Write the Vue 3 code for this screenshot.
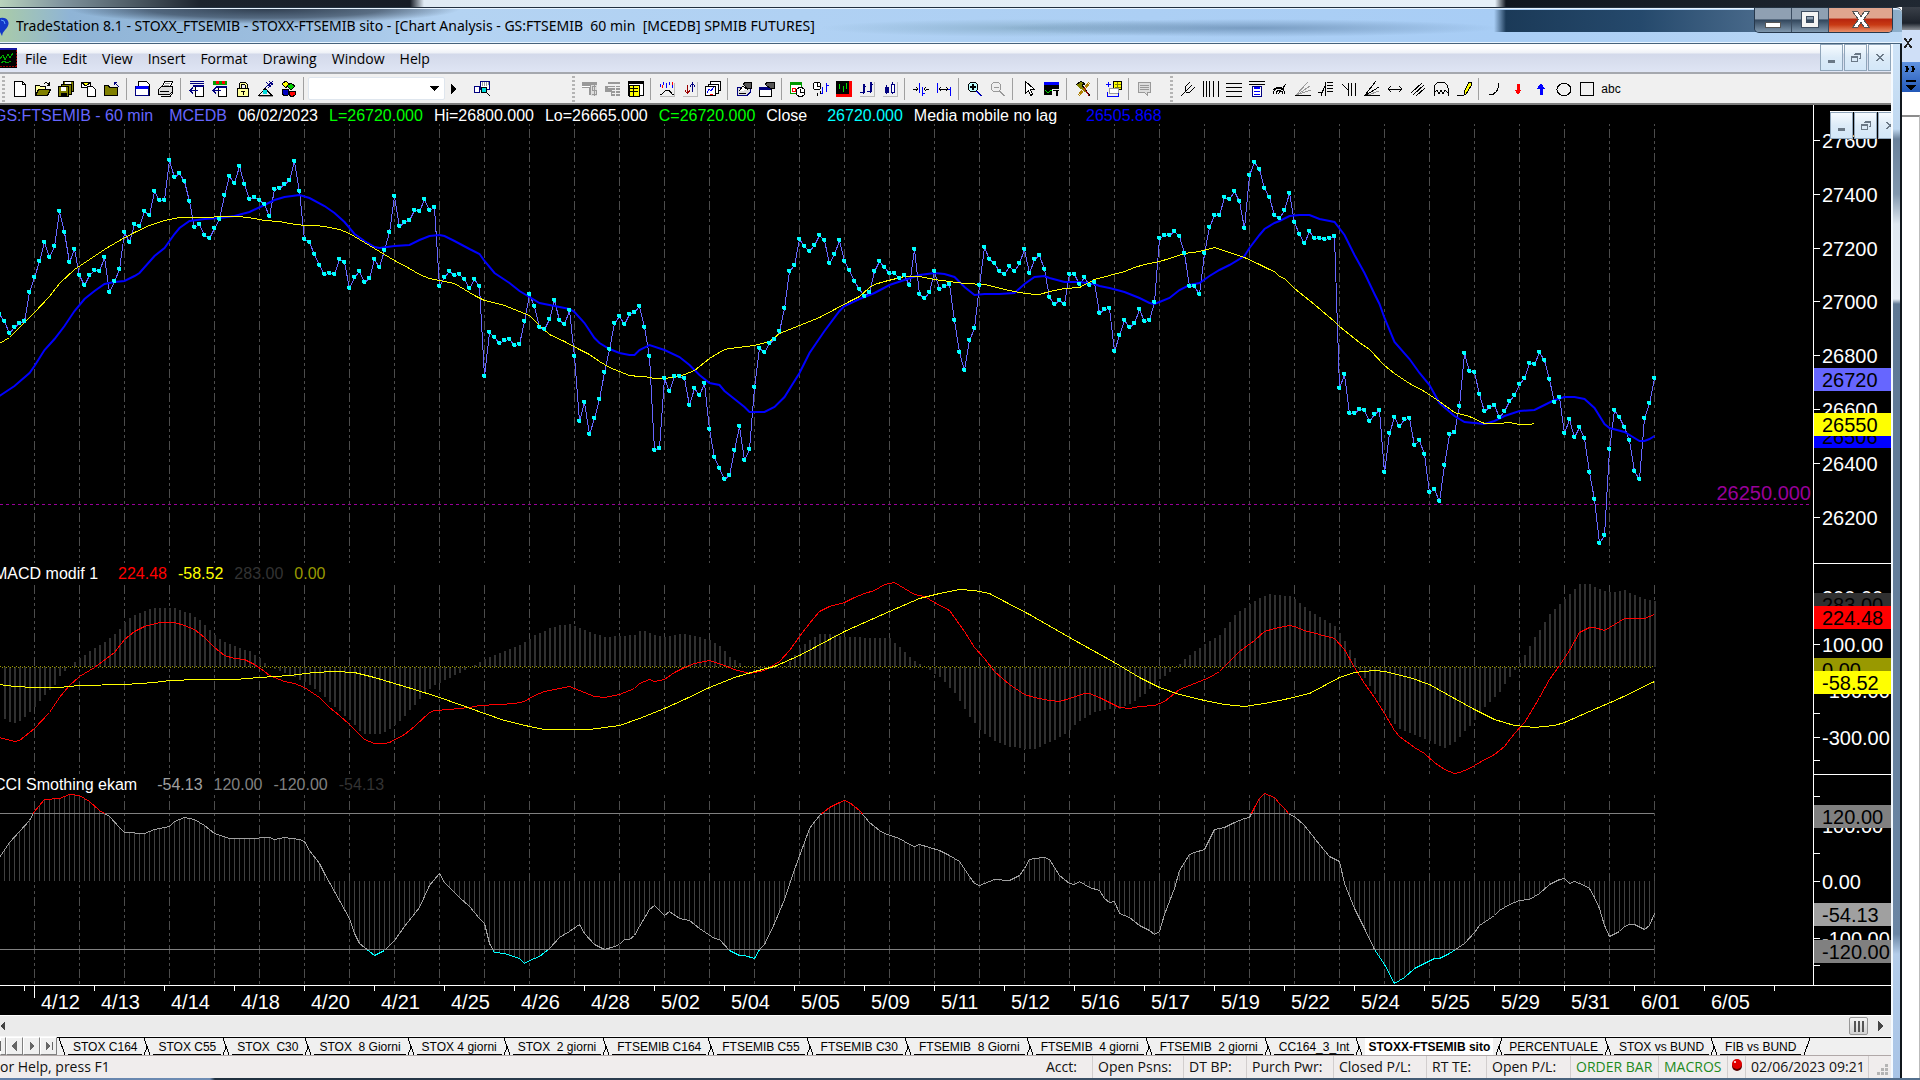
<script setup>
const FIRST_X = 34.5
const STEP = 5
const LAST_BAR = 324
const barX = (i) => FIRST_X + i * STEP

// Closing levels, one per bar from bar -7, in thirds of a plot row.
const closes = `552 573 609 591 579 573 486 441 393 336 381 348 243 306 396 357 435 465 435 420 423 381 486 453 417 306 336
282 288 243 255 183 210 210 90 141 129 153 213 291 282 315 324 294 267 195 138 159 108 162 207 201 210 222 258 177 174 162
150 93 183 327 336 372 405 432 429 432 387 396 474 441 423 456 444 387 411 360 306 198 288 276 270 240 243 207 240 231 468
441 423 435 432 447 474 447 468 738 606 621 639 630 627 645 642 573 492 528 591 597 567 510 570 582 540 678 873 816 912 864
807 726 657 579 558 582 552 546 528 591 678 960 954 744 783 738 738 744 825 774 795 759 897 981 1014 1047 1035 960 888 990
957 771 654 666 639 627 603 534 423 405 327 348 363 345 315 330 399 372 330 393 420 453 477 498 486 423 393 411 429 429 444
435 465 357 492 504 486 423 477 468 462 570 666 720 630 594 465 351 387 399 423 432 408 423 399 357 429 387 375 417 501 522
510 522 432 432 462 441 465 456 549 537 534 663 615 570 591 579 537 573 570 516 324 315 315 303 318 369 468 468 492 369 291
255 255 201 207 183 213 294 135 96 117 174 201 255 264 240 189 276 312 339 303 324 324 327 324 318 774 732 849 849 837 840
873 852 840 1026 909 861 888 867 864 945 930 972 1086 1077 1113 1005 912 906 828 669 723 726 792 843 831 825 861 843 813
795 762 744 699 702 666 690 747 816 801 909 867 921 891 924 1026 1107 1239 1215 957 840 861 891 930 1023 1047 864 819 744`
  .split(/\s+/).map(Number)

const fastAverage = `-7:795 -4:765 -1:727 0:705 2:657 4:625 6:585 8:540 10:505 12:480 14:460 16:454 18:450 20:435 21:425 24:375 26:350
28:310 29:292 31:270 34:263 37:262 40:256 43:244 46:222 48:207 50:197 53:192 55:200 58:226 60:245 62:272 64:310 66:330 68:347
69:350 72:346 75:341 77:328 79:314 81:312 82:315 84:330 87:354 89:370 90:390 92:427 95:457 97:480 99:499 101:517 104:526
107:535 108:544 110:575 112:620 113:636 115:655 117:665 119:671 120:671 121:658 123:641 126:656 129:677 131:702 133:733
135:755 137:763 138:780 140:804 142:828 143:843 146:843 148:829 150:798 153:725 155:665 158:600 161:540 162:525 165:505
168:487 171:462 174:448 177:431 180:426 182:429 184:439 186:468 188:491 190:489 193:489 196:485 198:458 200:438 202:435
203:442 206:452 209:454 212:458 213:465 215:471 218:482 221:500 223:517 224:519 225:514 227:501 229:477 231:462 233:455
235:434 237:418 239:402 242:375 243:352 245:312 246:294 248:277 249:271 251:255 253:252 255:252 257:265 260:273 262:313
264:373 266:425 268:490 269:520 270:560 272:632 275:685 277:725 279:762 281:815 284:855 286:873 290:879 292:870 294:855
297:840 300:836 302:823 304:807 306:798 308:798 310:803 312:830 314:880 315:892 318:904 320:920 321:930 322:930 323:924 324:915`

const slowAverage = `-7:639 -5:621 -3:591 0:547 3:497 5:460 8:418 11:388 14:358 17:331 20:305 23:286 26:270 29:260 31:260 41:259 44:265
46:271 49:274 51:280 54:284 56:284 58:288 61:297 63:309 65:326 67:345 69:362 72:389 75:414 77:432 79:443 81:449 84:458 86:478
88:496 90:509 91:514 94:525 97:542 99:556 101:585 103:611 106:633 109:657 111:671 113:694 115:710 117:722 119:736 121:739
122:739 124:745 126:745 129:738 132:720 135:685 138:656 139:653 144:644 147:634 149:610 153:584 157:560 160:538 163:514
165:498 167:470 168:463 170:454 174:437 177:437 180:446 183:454 186:459 190:461 191:465 194:477 197:485 200:493 201:491
203:482 206:473 209:470 212:446 215:434 218:424 220:412 222:401 225:392 227:383 230:368 233:362 236:352 239:366 242:381
245:401 247:417 248:424 249:437 250:445 252:473 256:523 260:574 261:587 265:635 267:657 270:705 272:728 275:760 278:784
281:813 284:847 287:857 290:879 293:880 295:877 297:882 299:883 300:878`

const macdBars = `-7:470 -6:478 -5:485 -4:489 -3:483 -2:471 -1:456 0:440 2:406 4:376 5:348 7:320 9:294 12:264 15:235 17:206 18:185
20:165 22:152 24:144 28:144 31:160 33:180 36:225 38:246 40:258 43:274 45:295 47:322 49:333 51:345 54:367 57:395 60:440 63:480
65:512 66:522 69:522 71:507 73:483 76:434 78:400 80:375 82:360 85:338 87:322 90:297 93:279 96:261 98:246 100:225 103:205
105:196 107:193 109:204 111:217 114:231 117:228 120:224 121:214 122:214 123:218 124:226 126:231 128:224 130:222 133:231
135:240 137:257 139:290 142:317 144:325 147:328 150:318 152:285 153:264 155:240 157:222 159:223 162:231 167:233 171:235
173:262 175:292 178:322 181:350 184:400 187:470 189:510 192:542 195:560 198:567 200:566 203:547 206:523 209:482 212:455
215:448 217:446 219:432 222:401 225:358 228:325 231:285 234:252 237:225 240:165 243:133 245:115 247:103 249:105 251:108
252:118 254:142 257:171 260:198 262:242 264:295 265:330 267:378 269:425 271:474 273:507 275:520 278:536 281:558 282:564
284:546 287:498 290:440 293:395 295:350 297:310 298:285 300:232 303:163 306:118 308:88 309:72 311:72 313:88 315:97 318:91
320:105 322:117 324:123`

const macdLine = `-7:530 -4:542 -3:540 0:504 3:456 5:410 7:374 9:348 12:320 16:275 18:238 20:212 22:197 25:187 28:187 30:195 32:208
34:232 36:262 38:286 40:294 42:298 44:312 46:332 47:345 50:363 52:368 54:381 57:410 59:440 61:464 63:493 65:522 66:537 68:550
70:550 71:547 74:522 76:497 79:457 80:451 83:448 87:441 89:434 93:431 96:429 98:423 100:405 102:394 105:385 107:379 110:395
112:407 114:412 117:403 120:385 121:370 123:358 124:364 126:358 128:337 130:322 132:308 135:301 138:314 140:327 143:340
146:330 149:303 151:270 153:228 155:188 157:153 159:138 162:126 164:112 166:98 168:90 170:71 172:67 174:85 176:101 178:108
180:125 183:150 184:172 186:212 188:262 190:294 192:333 195:372 198:402 200:411 203:419 205:422 207:413 210:400 211:400
213:411 215:426 217:441 219:445 221:437 224:436 226:422 229:388 232:369 235:352 237:334 239:303 241:273 244:240 246:214
248:204 250:198 251:196 252:199 254:211 257:222 260:233 262:267 264:320 266:370 268:412 270:460 272:510 273:529 276:560
278:580 280:605 282:627 283:634 284:638 285:636 287:625 289:606 292:582 294:557 296:520 298:487 299:462 301:410 303:358
305:315 307:270 309:217 311:202 312:202 314:209 316:191 318:175 322:175 324:163`

const macdSignal = `-7:371 -4:379 0:382 5:381 9:374 18:373 24:366 27:361 33:358 40:358 45:352 51:345 56:337 60:334 64:337 68:350 72:368
76:388 81:410 85:431 90:460 94:480 99:499 102:507 106:508 111:506 117:494 121:475 126:445 130:416 135:382 140:350 144:334
148:317 153:286 162:212 171:152 177:114 181:98 185:88 188:90 191:100 194:122 199:162 207:232 216:305 221:350 225:380 229:402
234:421 238:432 242:437 246:430 250:416 255:398 261:350 264:337 268:331 270:334 275:350 279:372 284:415 288:448 292:477
296:494 300:501 304:495 306:486 311:452 317:415 324:363`

const cciLine = `-7:890 -5:845 -3:812 -1:780 0:752 2:718 5:715 7:701 9:706 11:724 13:750 15:768 17:800 18:816 22:818 24:806 27:798
28:783 30:772 32:777 34:795 36:820 39:833 43:833 47:832 48:837 50:832 53:836 54:843 55:870 57:908 58:940 59:965 61:1020
63:1075 64:1118 65:1150 67:1172 68:1184 70:1171 72:1140 74:1098 77:1040 79:975 81:938 82:965 85:1010 87:1038 89:1073 90:1090
91:1150 92:1177 94:1180 97:1195 98:1208 99:1201 101:1188 103:1163 105:1130 107:1112 109:1092 110:1118 112:1152 114:1166
116:1159 117:1152 118:1136 119:1138 120:1125 121:1098 123:1048 124:1034 126:1065 127:1053 129:1075 131:1080 133:1105 136:1134
137:1136 139:1170 141:1184 142:1184 144:1193 145:1168 146:1152 148:1090 150:1018 152:928 154:845 155:803 157:766 159:740
161:726 162:721 163:726 165:750 167:785 169:810 170:820 173:833 175:852 176:857 177:853 179:860 181:870 183:884 185:903
187:947 188:968 189:976 190:968 192:956 195:960 197:945 198:925 199:898 200:893 202:891 203:897 205:945 207:968 208:971
209:964 211:980 213:990 214:1015 215:1027 216:1024 217:1060 219:1070 221:1095 223:1110 224:1123 225:1114 226:1062 228:985
229:930 231:882 232:877 234:868 236:807 238:800 240:787 242:775 243:770 244:742 245:715 246:700 248:712 249:730 250:745
251:762 252:768 254:795 257:853 259:888 261:903 262:968 264:1045 266:1105 268:1168 270:1213 272:1270 274:1252 276:1225
278:1208 280:1195 281:1195 283:1178 286:1148 288:1115 289:1095 292:1066 293:1050 295:1032 297:1021 299:1016 301:1000 303:972
305:957 306:953 307:970 308:964 310:974 311:985 312:1010 313:1045 314:1095 315:1128 317:1113 318:1098 319:1093 320:1093
322:1108 323:1095 324:1060`

const parse = (text) => text.split(/\s+/).map((pair) => pair.split(':').map(Number))
const priceY = (v) => Math.round(25 + v / 3)
const macdY = (v) => Math.round(v / 3 - 3)
const cciY = (v) => Math.round(v / 3 - 214)

const toPoints = (pairs, scale, nudge = 0.5) => pairs.map(([i, v]) => `${barX(i)},${scale(v) + nudge}`).join(' ')

const valueAt = (pairs, i) => {
  const next = pairs.findIndex(([bar]) => bar >= i)
  if (next <= 0) return pairs[0][1]
  const [a, va] = pairs[next - 1]
  const [b, vb] = pairs[next]
  return va + ((vb - va) * (i - a)) / (b - a)
}

const barsPath = (pairs, zero, scale) => {
  let d = ''
  for (let i = -6; i <= LAST_BAR; i++) d += `M${barX(i)} ${zero}V${scale(valueAt(pairs, i))}`
  return d
}

const closePairs = closes.map((v, n) => [n - 7, v])
const closePoints = toPoints(closePairs, priceY)
const dotsPath = closePairs.map(([i, v]) => `M${Math.floor(barX(i)) - 2} ${priceY(v) - 2}h4v4h-3v-1h-1z`).join('')
const fastPoints = toPoints(parse(fastAverage), priceY, 1)
const slowPoints = toPoints(parse(slowAverage), priceY)
const macdPoints = toPoints(parse(macdLine), macdY)
const signalPoints = toPoints(parse(macdSignal), macdY)
const macdBarsPath = barsPath(parse(macdBars), 104, macdY)
const cciPoints = toPoints(parse(cciLine), cciY)
const cciBarsPath = barsPath(parse(cciLine), 107, cciY)
const gridX = Array.from({ length: 37 }, (_, k) => FIRST_X + 45 * k)
const tickX = Array.from({ length: 26 }, (_, k) => 24.5 + 70 * k)

const days = ['4/12', '4/13', '4/14', '4/18', '4/20', '4/21', '4/25', '4/26', '4/28', '5/02', '5/04', '5/05', '5/09', '5/11',
  '5/12', '5/16', '5/17', '5/19', '5/22', '5/24', '5/25', '5/29', '5/31', '6/01', '6/05']

const pct = (y, h) => ({ top: `${(y / h) * 100}%` })
const priceScale = [27600, 27400, 27200, 27000, 26800, 26600, 26400, 26200].map((label, k) => ({ label, y: 36 + Math.round(53.8 * k) }))
const priceTags = [
  { label: '26720', y: 275, kind: 'violet' }, { label: '26506', y: 332, kind: 'blue' }, { label: '26550', y: 320, kind: 'yellow' },
]
const macdScale = [
  { label: '300.00', y: 34 }, { label: '100.00', y: 81 }, { label: '-100.00', y: 128 }, { label: '', y: 151 },
  { label: '-300.00', y: 175 }, { label: '', y: 198 },
]
const macdTags = [
  { label: '283.00', y: 41, kind: 'coal' }, { label: '224.48', y: 54, kind: 'red' },
  { label: '0.00', y: 107, kind: 'olive' }, { label: '-58.52', y: 120, kind: 'yellow' },
]
const cciScale = [
  { label: '', y: 22 }, { label: '100.00', y: 51 }, { label: '', y: 79 }, { label: '0.00', y: 108 },
  { label: '-100.00', y: 165 }, { label: '', y: 192 },
]
const cciTags = [
  { label: '120.00', y: 42, kind: 'grey' }, { label: '-54.13', y: 141, kind: 'silver' }, { label: '-120.00', y: 178, kind: 'grey' },
]

const K = '#000', N = '#000080', W = '#fff', G = '#999', O = '#808000', Y = '#ffff00', B = '#0000ff'
// Each layer is [path, fill, stroke].
const icons = {
  New: [['M2.500 .5h8l3 3v12h-11z', W, K], ['M10.500 .5v3h3', 'none', K]],
  Open: [['M.5 14V4.500h4l1 1h5v3', '#ffff99', K], ['M.5 14.500l3-6h12l-3 6z', O, K], ['M9 2.500q3-2 5 1M14.500 1v3h-3', 'none', K]],
  'Save all': [['M5.500 .5h10v10h-10z', O, K], ['M3 3h10v10H3z', O, K], ['M.5 5.500h10v10H.5z', O, K], ['M3 6h5v4H3z', W, 'none'], ['M3 12h6v3H3z', K, 'none'], ['M7 1h6v2H7z', W, 'none']],
  'New from mail': [['M.5 1.500h9v5h-9z', W, K], ['M1 2l4 3 4-3', Y, K], ['M6.500 5.500h5l3 3v7h-8z', W, K]],
  'Close folder': [['M.5 14.500v-10h4l1 2h8v8z', O, K], ['M10 1.500h3M10.500 1v3M11 2l4 4', 'none', N]],
  'Page setup': [['M3.500 .5h8l3 3v11h-11z', W, K], ['M.5 5.500h13v9H.5z', W, N], ['M1 5h12v3H1z', B, 'none']],
  Print: [['M4.500 5.500l2-5h8l-2 5z', W, K], ['M.5 8.500l3-3h11v5l-3 3H.5z', '#ddd', K], ['M2 10.500h9M3 15.500h9l3-4', 'none', K], ['M7 2.500h5M6 4.500h5', 'none', G]],
  'Format bar': [['M1 .5h14M1 2.500h14', 'none', N], ['M4 4h11v2H4z', N, 'none'], ['M6.500 6v9h8V6', W, K], ['M1 9.500h8M4 6.500l-3 3 3 3', 'none', N]],
  'Format colours': [['M1 0h14v4H1z', '#00a000', 'none'], ['M4 0h3v3H4zM10 0h3v3h-3z', '#f00', 'none'], ['M4 5h11v2H4z', N, 'none'], ['M6.500 7v8h8V7', W, K], ['M1 9.500h8M4 6.500l-3 3 3 3', 'none', N]],
  Lock: [['M4 7V3l2-2h4l2 2v4h-2V4L9 3H7L6 4v3z', '#ffff99', K], ['M2.500 7.500h11v8h-11z', '#ffff99', K], ['M6 10.500h4M8 10v4', 'none', K]],
  Network: [['M1 14.500l6-7 7 7z', '#eee', K], ['M5 9h4v4H5z', '#0dd', 'none'], ['M7 7l8-7M10 7l5-5M8 1l5 5M11 0l4 4', 'none', N], ['M1 15.500h14', 'none', G]],
  Blocks: [['M1 3l4-3 3 3-3 4z', Y, K], ['M6 5l4-3 4 3-4 4z', '#0c0', K], ['M1 8h6v6l-3 1-3-2z', '#0000c0', K], ['M8 10h6v4l-3 2-3-2z', '#f00', K]],
  Find: [['M.5 5.500h5v6h-5zM6.500 .5h9v8h-9z', W, N], ['M8 1v4M10 1v4M12 1v4M14 1v3', 'none', G], ['M7 9a3 3 0 1 1 6 0a3 3 0 1 1-6 0z', '#0dd', K], ['M12 11l4 4', 'none', K]],
  Account: [['M0 1h15v14h-4V8H9v6H7V7H0z', G, 'none'], ['M0 5h8', 'none', W], ['M9 4h6v11H9z', '#ddd', 'none'], ['M14 5.500h-4v4h4v4h-4M12 4v11', 'none', G]],
  Orders: [['M3 1h12v2H3zM0 5h15v10H6v-4H0z', G, 'none'], ['M3 6.500h12M7 9.500h8M7 12.500h8M10.500 5v10', 'none', '#eee']],
  Positions: [['M.5 .5h15v14H.5z', W, K], ['M0 0h15v3H0z', K, 'none'], ['M1 4h10v11H1z', Y, K], ['M2 7.500h8M2 10.500h8M5.500 5v10', 'none', K]],
  Study: [['M1 3v3M4 1v3M7 2v5M10 1v3M13 4v3', 'none', B], ['M13.500 1v3M3.500 4v3', 'none', '#f00'], ['M1 13h2l4-4h3l3 4h2', 'none', K], ['M1 15.500h14V2', 'none', '#bbb']],
  Signals: [['M5.500 4v8M3 9.500l2.500 3 2.500-3', 'none', '#900'], ['M10.500 11V3M8 5.500L10.500 2 13 5.500', 'none', N], ['M1 15.500h14V1', 'none', '#bbb']],
  Charts: [['M5.500 .5h10v9h-10z', W, K], ['M3 3h10v9H3z', W, K], ['M.5 5.500h10v9H.5z', W, K], ['M2 12l2-4 2 2 3-4', 'none', B], ['M5 13h3', 'none', '#f00']],
  'Format symbol': [['M1 6.500h13v5l-3 3H1z', '#ddd', N], ['M7 3l3-2h5v6h-4z', '#555', K], ['M3 10l4-5 5 4M3 12h7', W, K]],
  'Format window': [['M.5 6.500h12v9H.5z', W, K], ['M0 6h12v3H0z', N, 'none'], ['M6 3l3-2h6v6h-4L8 5z', '#555', K]],
  'Time range': [['M.5 1.500h11v11H.5z', W, '#090'], ['M0 1h12v3H0z', '#090', 'none'], ['M2 7h3v3H2z', W, '#f00'], ['M6 11a4.500 4.500 0 1 1 9 0a4.500 4.500 0 1 1-9 0z', W, K], ['M10.500 8v3h3', 'none', K]],
  Interval: [['M0 5a4 4 0 1 1 8 0a4 4 0 1 1-8 0z', W, K], ['M4 2v3h3M4 12v3M7 10v3', 'none', K], ['M9.500 6v7M9.500 12h-2M13.500 2v9M13.500 4h2', 'none', B]],
  'Chart style': [['M0 0h16v16H0z', '#f00', 'none'], ['M0 0h13v13H0z', K, 'none'], ['M3.500 3v5M7.500 5v6M10.500 2v6', 'none', '#0d0']],
  'Bar chart': [['M4 3v10M1 11h3M4 5h3M11 1v11M8 10h3M11 3h3M5 3v9M12 1v10', 'none', N], ['M1 15.500h14V1', 'none', '#bbb']],
  Candlestick: [['M4.500 4v9M10.500 1v12', 'none', N], ['M3 6h3v5H3z', N, N], ['M9 3h3v8H9z', W, N], ['M1 15.500h14V1', 'none', '#bbb']],
  'Less spacing': [['M0 8h4M3 6l2 2-2 2M16 8h-3M13 6l-2 2 2 2', 'none', K], ['M6.500 2v10M9.500 6v9M9.500 12h2', 'none', B]],
  'More spacing': [['M3 8h9M5 6L3 8l2 2M10 6l2 2-2 2', 'none', K], ['M1.500 2v10M14.500 6v9M12 8h2', 'none', B]],
  'Zoom in': [['M1 6a5 5 0 1 1 10 0a5 5 0 1 1-10 0z', '#bff', K], ['M3 6h6M6 3v6M3 5h6M5 3v6', 'none', K], ['M10 10l5 5', 'none', N], ['M9 10l5 5', 'none', B]],
  'Zoom out': [['M1 6a5 5 0 1 1 10 0a5 5 0 1 1-10 0z', '#eee', G], ['M3.500 6h5M10 10l5 5M9 10l5 5', 'none', G]],
  Pointer: [['M4.500 .5v12l3-3 2 5 2-1-2-5h4z', W, K]],
  'Text window': [['M0 1h15v13H0z', K, 'none'], ['M0 1h15v3H0z', B, 'none'], ['M1 9l3 3 3-3 3 1', 'none', '#0d0'], ['M8 8h8v8H8z', '#eee', 'none'], ['M9 9.500h6M12 9v6M13 9v6', 'none', K]],
  Tools: [['M1 4l5-4 4 3-3 1 8 11', O, K], ['M14 1L3 14M15 2L4 15', 'none', '#b08000'], ['M9 6l5 9', 'none', '#900']],
  Workspace: [['M7.500 .5h8v8h-8z', Y, K], ['M9 3h6M9 6h6M11.500 1v7', 'none', O], ['M3.500 7.500h9v5h-9z', W, G], ['M0 3.500h5M2.500 1v5M1 11v4h11v-3', 'none', B]],
  Message: [['M1.500 1.500h12v10h-3v3l-3-3h-6z', '#ddd', G], ['M3 4.500h9M3 6.500h9M3 8.500h9', 'none', G]],
  Pitchfork: [['M1 15L12 4M5 10V6l5-5M6 11h4l5-5', 'none', K]],
  Cycles: [['M.5 0v16M3.500 0v16M6.500 0v16M10.500 0v16M15.500 0v16', 'none', K]],
  Levels: [['M0 2.500h16M0 6.500h16M0 10.500h16M0 15.500h16', 'none', K]],
  Calculator: [['M0 .5h16M0 3.500h16', 'none', K], ['M3.500 5.500h9v10h-9z', W, N], ['M5 6h6v2H5z', B, 'none'], ['M5 10.500h6M5 13.500h6', 'none', B]],
  Arcs: [['M1 13a6 6 0 0 1 12 0M4 13a3.500 3.500 0 0 1 7 0M1 9a7 5 0 0 1 11-1M6 13L14 3', 'none', K]],
  Fan: [['M0 14.500h16', 'none', K], ['M1 14L13 1M2 14L15 5M4 13l12-4', 'none', G]],
  'Extension lines': [['M0 11h3v4M3 14L7 5V1M7 .5v14', 'none', K], ['M9 1.500h6M9 4.500h6M9 7.500h6M9 10.500h6', 'none', K]],
  'Time zones': [['M1 3l6 6M7.500 2v13M10.500 2v13M14.500 2v13', 'none', K]],
  'Speed lines': [['M0 14.500h16M1 14L12 0M2 14L15 6', 'none', K], ['M4 14l11-4', 'none', G]],
  'Horizontal segment': [['M1 8h14M4 5L1 8l3 3M12 5l3 3-3 3', 'none', K]],
  'Parallel lines': [['M1 12L12 2M3 14L14 4M6 15l9-8', 'none', K]],
  Ellipses: [['M1 15V7q1-6 7-6t7 6v8M1 12l3-3 2 4 2-4 2 4 2-4 3 3', 'none', K]],
  Pencil: [['M1 14.500h7', 'none', K], ['M8 14l1-5 4-8h2v4l-5 8z', Y, K]],
  'Arc segment': [['M2 14q9 0 10-12', 'none', K]],
  'Down arrow': [['M7 3h2v6h2l-3 4-3-4h2z', '#f00', '#f00']],
  'Up arrow': [['M7 13h2V7h2L8 3 5 7h2z', B, B]],
  Oval: [['M1 8.500a7 6 0 1 1 14 0a7 6 0 1 1-14 0z', 'none', K]],
  Rectangle: [['M1.500 1.500h13v13h-13z', 'none', K]],
}

const fileGroups = [['New', 'Open', 'Save all', 'New from mail', 'Close folder'], ['Page setup', 'Print'],
  ['Format bar', 'Format colours', 'Lock', 'Network', 'Blocks']]
const chartGroups = [['Account', 'Orders', 'Positions'], ['Study', 'Signals', 'Charts'], ['Format symbol', 'Format window'],
  ['Time range', 'Interval', 'Chart style', 'Bar chart', 'Candlestick'], ['Less spacing', 'More spacing'], ['Zoom in', 'Zoom out'],
  ['Pointer', 'Text window'], ['Tools'], ['Workspace'], ['Message']]
const drawGroups = [['Pitchfork', 'Cycles', 'Levels', 'Calculator', 'Arcs', 'Fan', 'Extension lines', 'Time zones', 'Speed lines',
  'Horizontal segment', 'Parallel lines', 'Ellipses', 'Pencil'], ['Arc segment', 'Down arrow', 'Up arrow', 'Oval', 'Rectangle']]
const toolbars = [
  { id: 'file', groups: fileGroups }, { id: 'analysis', groups: chartGroups }, { id: 'draw', groups: drawGroups },
]

const menus = ['File', 'Edit', 'View', 'Insert', 'Format', 'Drawing', 'Window', 'Help']
const sheets = ['STOX C164', 'STOX C55', 'STOX  C30', 'STOX  8 Giorni', 'STOX 4 giorni', 'STOX  2 giorni', 'FTSEMIB C164',
  'FTSEMIB C55', 'FTSEMIB C30', 'FTSEMIB  8 Giorni', 'FTSEMIB  4 giorni', 'FTSEMIB  2 giorni', 'CC164_3_Int',
  'STOXX-FTSEMIB sito', 'PERCENTUALE', 'STOX vs BUND', 'FIB vs BUND']
const ACTIVE = 13
const edgePath = (n) => {
  if (n === 0) return 'M2 0l6 17'
  if (n === ACTIVE + 1) return 'M9 0L3 17M6 9l3 8'
  return 'M2 0l6 17M5 9l-3 8'
}
const sheetNav = [
  { name: 'First sheet', d: 'M2 3v8M8 3L4 7l4 4z' }, { name: 'Previous sheet', d: 'M8 3L4 7l4 4z' },
  { name: 'Next sheet', d: 'M5 3l4 4-4 4z' }, { name: 'Last sheet', d: 'M4 3l4 4-4 4zM10 3v8' },
]
const status = [
  { text: 'Acct:', w: 52 }, { text: 'Open Psns:', w: 91 }, { text: 'DT BP:', w: 63 }, { text: 'Purch Pwr:', w: 87 },
  { text: 'Closed P/L:', w: 93 }, { text: 'RT TE:', w: 60 }, { text: 'Open P/L:', w: 84 },
  { text: 'ORDER BAR', w: 88, green: true }, { text: 'MACROS', w: 69, green: true },
]
</script>

<template>
  <div class="screen">
    <div class="strip"></div>
    <div class="row">
      <div class="window">
        <header class="title">
          <svg class="logo" width="9" height="22" viewBox="0 0 9 22"><path d="M0 2q6-1 8 3t-3 9q-3 3-3 6l-2-4z" fill="#1238c8" /><path d="M1 4q4 0 4 4" stroke="#5aa0ff" fill="none" /></svg>
          <h1>TradeStation 8.1 - STOXX_FTSEMIB - STOXX-FTSEMIB sito - [Chart Analysis - GS:FTSEMIB&nbsp; 60 min&nbsp; [MCEDB] SPMIB FUTURES]</h1>
          <div class="winbtns">
            <button class="min" aria-label="Minimize"><svg width="20" height="20"><path d="M2.500 12.500h15v5h-15z" fill="#fff" stroke="#555" /></svg></button>
            <button class="max" aria-label="Maximize"><svg width="20" height="20"><path d="M1.500 1.500h17v16h-17zM6.500 6.500v6h7v-6z" fill="#f4f4f4" fill-rule="evenodd" stroke="#3c4c60" /></svg></button>
            <button class="quit" aria-label="Close"><svg width="20" height="20"><path d="M1.500 1.500h5l3.500 5 3.500-5h5l-6 8 6 8h-5l-3.500-5-3.500 5h-5l6-8z" fill="#fff" stroke="#555" /></svg></button>
          </div>
        </header>

        <div class="body">
          <div class="client">
            <nav class="menubar">
              <svg class="docicon" width="17" height="20"><path d="M0 0h17v20H0z" fill="#000" /><path d="M0 0h17v2H0z" fill="#1515a0" /><path d="M16.500 2v18M0 18.500h17" stroke="#a00000" stroke-dasharray="2 1" /><path d="M0 11l3-4 2 5 3-6 2 4 3-5M1 15l3-2 3 2 4-2" fill="none" stroke="#0a0" /></svg>
              <button v-for="m in menus" :key="m" class="menu">{{ m }}</button>
              <div class="mdi">
                <button aria-label="Minimize chart"><svg width="12" height="12"><path d="M2 8h6v2H2z" /></svg></button>
                <button aria-label="Restore chart"><svg width="12" height="12"><path d="M4.500 1.500h6v5h-2M4 2h7M1.500 4.500h6v5h-6zM1 5h7" fill="none" /></svg></button>
                <button aria-label="Close chart"><svg width="12" height="12"><path d="M2 2l7 7M9 2l-7 7M3 2l7 7M10 2l-7 7" fill="none" /></svg></button>
              </div>
            </nav>

            <div class="toolbar">
              <div v-for="bar in toolbars" :key="bar.id" class="tools" :class="bar.id">
                <span class="grip"></span>
                <div v-for="(group, g) in bar.groups" :key="g" class="group">
                  <button v-for="name in group" :key="name" class="tool" :aria-label="name">
                    <svg width="16" height="16" viewBox="0 0 16 16">
                      <path v-for="(layer, l) in icons[name]" :key="l" :d="layer[0]" :fill="layer[1]" :stroke="layer[2]" />
                    </svg>
                  </button>
                </div>
                <template v-if="bar.id === 'file'">
                  <div class="combo">
                    <select aria-label="Symbol"><option></option></select>
                    <svg width="9" height="6"><path d="M0 0h9L4.500 5z" /></svg>
                  </div>
                  <button class="go" aria-label="Go"><svg width="6" height="10"><path d="M0 0l5 5-5 5z" /></svg></button>
                  <button class="tool" aria-label="Find">
                    <svg width="16" height="16" viewBox="0 0 16 16"><path v-for="(layer, l) in icons.Find" :key="l" :d="layer[0]" :fill="layer[1]" :stroke="layer[2]" /></svg>
                  </button>
                </template>
                <button v-if="bar.id === 'draw'" class="tool abc">abc</button>
              </div>
            </div>

            <main class="chart">
              <section class="panel price">
                <div class="plot">
                  <svg viewBox="0 0 1813 458" preserveAspectRatio="none">
                    <path v-for="x in gridX" :key="x" class="grid" :d="`M${x} 19V458`" stroke-dashoffset="19" />
                    <path class="target" d="M0 399.500H1809" />
                    <polyline class="line closing" :points="closePoints" />
                    <polyline class="line fast" :points="fastPoints" />
                    <polyline class="line yellow" :points="slowPoints" />
                    <path class="dots" :d="dotsPath" />
                  </svg>
                  <p class="legend first">
                    <span class="violet">GS:FTSEMIB - 60 min</span><span class="violet symbol">MCEDB</span><span>06/02/2023</span>
                    <span class="lime">L=26720.000</span><span>Hi=26800.000</span><span>Lo=26665.000</span>
                    <span class="lime">C=26720.000</span><span>Close</span><span class="aqua">26720.000</span>
                    <span>Media mobile no lag</span><span class="blue">26505.868</span>
                  </p>
                  <span class="target-label">26250.000</span>
                </div>
                <div class="axis">
                  <span v-for="t in priceScale" :key="t.y" class="mark" :style="pct(t.y, 458)">{{ t.label }}</span>
                  <span v-for="t in priceTags" :key="t.label" class="tag" :class="t.kind" :style="pct(t.y, 458)">{{ t.label }}</span>
                </div>
                <div class="mdi floating">
                  <button aria-label="Minimize panel"><svg width="12" height="12"><path d="M2 8h6v2H2z" /></svg></button>
                  <button aria-label="Restore panel"><svg width="12" height="12"><path d="M4.500 1.500h6v5h-2M4 2h7M1.500 4.500h6v5h-6zM1 5h7" fill="none" /></svg></button>
                  <button aria-label="Close panel"><svg width="12" height="12"><path d="M2 2l7 7M9 2l-7 7M3 2l7 7M10 2l-7 7" fill="none" /></svg></button>
                </div>
              </section>

              <section class="panel">
                <div class="plot">
                  <svg viewBox="0 0 1813 211" preserveAspectRatio="none">
                    <path v-for="x in gridX" :key="x" class="grid" :d="`M${x} 22V211`" />
                    <path class="hist wide" :d="macdBarsPath" />
                    <path class="zero" d="M0 103.500H1654" /><path class="zero" d="M2 104.500H1654" />
                    <polyline class="line red" :points="macdPoints" />
                    <polyline class="line yellow" :points="signalPoints" />
                  </svg>
                  <p class="legend">
                    <span>MACD modif 1</span><span class="red">224.48</span><span class="yellow">-58.52</span>
                    <span class="coal">283.00</span><span class="olive">0.00</span>
                  </p>
                </div>
                <div class="axis ruled">
                  <span v-for="t in macdScale" :key="t.y" class="mark" :style="pct(t.y, 211)">{{ t.label }}</span>
                  <span v-for="t in macdTags" :key="t.label" class="tag" :class="t.kind" :style="pct(t.y, 211)">{{ t.label }}</span>
                </div>
              </section>

              <section class="panel">
                <div class="plot">
                  <svg viewBox="0 0 1813 211" preserveAspectRatio="none">
                    <defs>
                      <clipPath id="above"><path d="M0 0H1813V40H0z" /></clipPath>
                      <clipPath id="below"><path d="M0 176H1813V211H0z" /></clipPath>
                    </defs>
                    <path v-for="x in gridX" :key="x" class="grid" :d="`M${x} 21V211`" stroke-dashoffset="18" />
                    <path class="hist" :d="cciBarsPath" />
                    <path class="limit" d="M0 39.500H1654M0 175.500H1654" />
                    <polyline class="line silver" :points="cciPoints" />
                    <polyline class="line red" :points="cciPoints" clip-path="url(#above)" />
                    <polyline class="line aqua" :points="cciPoints" clip-path="url(#below)" />
                  </svg>
                  <p class="legend">
                    <span>CCI Smothing ekam</span><span class="silver">-54.13</span><span class="grey">120.00</span>
                    <span class="grey">-120.00</span><span class="coal">-54.13</span>
                  </p>
                </div>
                <div class="axis ruled">
                  <span v-for="t in cciScale" :key="t.y" class="mark" :style="pct(t.y, 211)">{{ t.label }}</span>
                  <span v-for="t in cciTags" :key="t.label" class="tag" :class="t.kind" :style="pct(t.y, 211)">{{ t.label }}</span>
                </div>
              </section>

              <div class="time">
                <svg viewBox="0 0 1891 13" preserveAspectRatio="none"><path v-for="x in tickX" :key="x" :d="`M${x} 0v5`" /><path d="M34.500 0v12" /></svg>
                <span v-for="d in days" :key="d">{{ d }}</span>
              </div>
            </main>

            <div class="scroll">
              <button class="left" aria-label="Scroll left"><svg width="5" height="10"><path d="M5 0L0 5l5 5z" /></svg></button>
              <button class="thumb" aria-label="Scroll position"><svg width="11" height="11"><path d="M1.500 0v11M5.500 0v11M9.500 0v11" stroke="#555" stroke-width="2" /></svg></button>
              <button class="right" aria-label="Scroll right"><svg width="5" height="10"><path d="M0 0l5 5-5 5z" /></svg></button>
            </div>

            <div class="sheets">
              <button v-for="n in sheetNav" :key="n.name" class="nav" :aria-label="n.name"><svg width="13" height="14"><path :d="n.d" /></svg></button>
              <template v-for="(s, n) in sheets" :key="s">
                <svg class="edge" width="11" height="17"><path :d="edgePath(n)" /></svg>
                <button class="sheet" :class="{ active: n === ACTIVE }">{{ s }}</button>
              </template>
              <svg class="edge" width="11" height="17"><path d="M9 0L3 17" /></svg>
              <span class="rest"></span>
            </div>

            <footer class="status">
              <span class="help">or Help, press F1</span>
              <span v-for="s in status" :key="s.text" class="cell" :class="{ green: s.green }" :style="{ width: s.w + 'px' }">{{ s.text }}</span>
              <span class="cell ball"><svg width="12" height="14"><circle cx="6" cy="8" r="5" fill="#500" /><circle cx="6" cy="6" r="5" fill="#e00000" /><circle cx="4" cy="4" r="1" fill="#fff" /></svg></span>
              <span class="cell clock">02/06/2023 09:21</span>
              <span class="cell corner"><svg width="12" height="12"><path d="M8 0h3v3H8zM4 4h3v3H4zM8 4h3v3H8zM0 8h3v3H0zM4 8h3v3H4zM8 8h3v3H8z" fill="#b4b4b4" /></svg></span>
            </footer>
          </div>
          <div class="frame"></div>
        </div>
      </div>

      <aside class="behind">
        <div class="dark"></div>
        <div class="bluebar"><svg width="10" height="12"><path d="M0 1l7 10M7 1L0 11M1 1l7 10M8 1L1 11" stroke="#222" /></svg></div>
        <div class="chevrons"><svg width="16" height="30"><path d="M4 4l2 3-2 3M10 4l2 3-2 3" fill="none" stroke="#000" stroke-width="2" /><path d="M4 18h10v2H4zM4 23h10l-5 6z" /></svg></div>
        <div class="paper"></div>
      </aside>
    </div>
    <div class="bottom"></div>
  </div>
</template>

<style>
body {
  background: #fff;
}
</style>

<style scoped>
* {
  box-sizing: border-box;
}
button {
  appearance: none;
  margin: 0;
  padding: 0;
  border: 0;
  background: none;
  font: inherit;
  color: inherit;
}
svg {
  display: block;
  flex: none;
  shape-rendering: crispEdges;
}
.screen {
  display: flex;
  flex-direction: column;
  min-height: 100vh;
  overflow: hidden;
  font-family: "Liberation Sans", Arial, sans-serif;
}
.strip {
  height: 7px;
  background: linear-gradient(90deg, #b9d3bd 0, #8296a0 60px, #1c242e 200px, #161c26 410px, #dfeaf3 424px, #e6f0f8 1495px, #10161f 1506px, #202832 100%);
}
.row {
  display: flex;
  flex: 1;
}
.window {
  display: flex;
  flex: 1;
  flex-direction: column;
  min-width: 0;
}
.title {
  display: flex;
  height: 37px;
  border-top: 1px solid #22303f;
  border-bottom: 1px solid #46627c;
  box-shadow: inset 0 1px #e8f4ff, inset 0 -1px #e8f4ff;
  border-radius: 0 6px 0 0;
  background:
    linear-gradient(90deg, transparent 1494px, #1b3a58 1506px, #25496c 1640px, #48698a 1756px, #8fb0cc 100%) 0 2px / 100% 22px no-repeat,
    radial-gradient(ellipse closest-side, #5f83a8aa, transparent) 1000px 11px / 500px 18px no-repeat,
    radial-gradient(ellipse closest-side, #7fa5bfaa, transparent) 820px 11px / 420px 18px no-repeat,
    radial-gradient(ellipse closest-side, #16202ecc, #16202e88 60%, transparent) 70px -14px / 390px 30px no-repeat,
    linear-gradient(90deg, #a9cba8 0, #8fb4d6 70px, #9ebfe0 300px, #b4d3f2 450px, #a8cdf5 1500px, #bcd8f4 100%);
}
.logo {
  margin-top: 8px;
  shape-rendering: auto;
}
h1 {
  flex: 1;
  margin: 0 0 0 7px;
  overflow: hidden;
  font: 14px/35px "Noto Sans", "Open Sans", sans-serif;
  white-space: nowrap;
  color: #000;
}
.winbtns {
  display: flex;
  height: 25px;
  margin-right: 9px;
  border: 1px solid #26384c;
  border-top: 0;
  border-radius: 0 0 5px 5px;
  overflow: hidden;
}
.winbtns button {
  display: flex;
  align-items: center;
  justify-content: center;
  width: 37px;
  border-right: 1px solid #3b4c60;
  background: linear-gradient(#8fa0b2 0 45%, #31465c 50%, #7f97ad);
}
.winbtns .quit {
  width: 63px;
  border: 0;
  background: linear-gradient(#e0a58e 0 40%, #b8260e 48%, #c83a14 70%, #e8906a);
}
.body {
  display: flex;
  flex: 1;
}
.client {
  display: flex;
  flex: 1;
  flex-direction: column;
  min-width: 0;
}
.frame {
  width: 11px;
  border-left: 2px solid #f4faff;
  border-right: 2px solid #10161c;
  background: linear-gradient(180deg, #cfe4f8 0, #bfd8f0 85px, #6a829c 95px, #8298ae 150px, #dfe8f0 180px, #e8eff6 255px, #5e7894 260px, #6b86a4 890px, #b4cdea 910px, #a8c4e6 100%);
}
.menubar {
  display: flex;
  gap: 15px;
  height: 30px;
  border-bottom: 2px solid #a5a8ae;
  background: linear-gradient(#fdfdfe 0 4px, #eef1f7 9px, #d3d9ea 10px, #dfe5f4);
  font: 14px/29px "Open Sans", "Noto Sans", sans-serif;
}
.docicon {
  margin: 4px -7px 0 0;
}
.mdi {
  display: flex;
  gap: 1px;
  margin-left: auto;
}
.mdi button {
  display: flex;
  align-items: center;
  justify-content: center;
  width: 23px;
  height: 27px;
  border: 1px solid #8fa5ba;
  background: linear-gradient(#f6fbff, #dcebf8 50%, #d3e7f8);
}
.mdi path {
  fill: #6a7886;
  stroke: #6a7886;
}
.mdi path[fill="none"] {
  fill: none;
}
.toolbar {
  display: flex;
  height: 31px;
  border-bottom: 2px solid #7d7d7d;
  background: #f0f0f0;
}
.tools {
  display: flex;
  align-items: center;
}
.tools.file {
  width: 570px;
}
.tools.analysis {
  width: 598px;
}
.grip {
  width: 3px;
  height: 26px;
  margin: 0 3px 0 2px;
  background: repeating-linear-gradient(#b4b4b4 0 2px, transparent 2px 4px);
}
.group {
  display: flex;
}
.group + .group {
  margin-left: 3px;
  padding-left: 4px;
  border-left: 1px solid #a0a0a0;
}
.tool {
  display: flex;
  align-items: center;
  justify-content: center;
  width: 23px;
  height: 22px;
}
.tool.abc {
  width: 26px;
  font-size: 12px;
}
.combo {
  position: relative;
  margin-left: 3px;
  padding-left: 4px;
  border-left: 1px solid #a0a0a0;
}
.combo select {
  appearance: none;
  display: block;
  width: 137px;
  height: 23px;
  border: 1px solid #dfe6ee;
  border-radius: 2px;
  background: #fff;
}
.combo svg {
  position: absolute;
  right: 6px;
  top: 9px;
}
.go {
  width: 16px;
  margin-right: 9px;
  padding-left: 6px;
}
.chart {
  display: flex;
  flex: 1;
  flex-direction: column;
  background: #000;
  color: #fff;
}
.panel {
  display: flex;
  flex: 211 1 0;
  position: relative;
  min-height: 0;
}
.panel.price {
  flex-grow: 458;
}
.plot {
  position: relative;
  flex: 1;
  min-width: 0;
}
.plot > svg {
  position: absolute;
  width: 100%;
  height: 100%;
}
.axis {
  position: relative;
  width: 78px;
  overflow: hidden;
  border-left: 1px solid #fff;
  font-size: 20px;
  line-height: 24px;
}
.axis.ruled {
  border-top: 1px solid #fff;
}
.mark,
.tag {
  position: absolute;
  left: 0;
  right: 0;
  height: 23px;
  margin-top: -12px;
  padding-left: 8px;
  white-space: nowrap;
}
.mark::before {
  content: "";
  position: absolute;
  left: 0;
  top: 11px;
  width: 6px;
  height: 1px;
  background: #fff;
}
.tag {
  color: #000;
}
.tag.violet { background: #6666ff; }
.tag.blue { background: #0000ff; }
.tag.yellow { background: #ffff00; }
.tag.coal { background: #303030; }
.tag.red { background: #ff0000; }
.tag.olive { background: #999900; }
.tag.grey { background: #808080; }
.tag.silver { background: #a0a0a0; }
.grid {
  stroke: #4c4c4c;
  stroke-dasharray: 9 3 3 3 3 3;
}
.line {
  fill: none;
}
.closing { stroke: #6666ff; }
.fast {
  stroke: #0000ff;
  stroke-width: 2;
  shape-rendering: geometricPrecision;
}
.line.yellow { stroke: #ffff00; }
.line.red { stroke: #ff0000; }
.line.silver { stroke: #a0a0a0; }
.line.aqua { stroke: #00ffff; }
.dots { fill: #00ffff; }
.target {
  stroke: #990099;
  stroke-dasharray: 3 3;
}
.target-label {
  position: absolute;
  right: 2px;
  bottom: 58px;
  font-size: 20px;
  line-height: 23px;
  color: #990099;
}
.hist { stroke: #404040; }
.hist.wide {
  stroke: #303030;
  stroke-width: 2;
}
.zero {
  stroke: #999900;
  stroke-dasharray: 1 3;
}
.limit { stroke: #808080; }
.legend {
  display: flex;
  gap: 11px;
  position: relative;
  margin: 0 0 0 -6px;
  padding-top: 1px;
  font-size: 16px;
  line-height: 20px;
  white-space: nowrap;
}
.legend .violet { color: #6666ff; }
.legend .lime { color: #00ff00; }
.legend .aqua {
  margin-left: 9px;
  color: #00ffff;
}
.legend .blue {
  margin-left: 18px;
  color: #0000ff;
}
.legend .symbol { margin-left: 5px; }
.legend .red {
  margin-left: 9px;
  color: #ff0000;
}
.legend .yellow { color: #ffff00; }
.legend .olive { color: #999900; }
.legend .coal { color: #333; }
.legend .grey { color: #808080; }
.legend .silver {
  margin-left: 9px;
  color: #a0a0a0;
}
.time {
  display: flex;
  position: relative;
  height: 30px;
  padding-left: 41px;
  border-top: 1px solid #fff;
  font-size: 20px;
  line-height: 32px;
}
.time svg {
  position: absolute;
  left: 0;
  top: 0;
  width: 100%;
  height: 13px;
}
.time path { stroke: #fff; }
.time span {
  width: 70px;
}
.time span:nth-of-type(1) {
  width: 60px;
}
.floating {
  position: absolute;
  right: 0;
  top: 6px;
  width: 61px;
  overflow: hidden;
  border-top: 1px solid #fff;
}
.floating button {
  flex: none;
}
.scroll {
  display: flex;
  align-items: center;
  height: 22px;
  background: #ebebeb;
  border-top: 1px solid #fff;
  border-bottom: 1px solid #f8f8f8;
}
.scroll .thumb {
  display: flex;
  align-items: center;
  justify-content: center;
  width: 19px;
  height: 18px;
  margin: 0 10px 0 auto;
  border: 1px solid #979797;
  border-radius: 2px;
  background: linear-gradient(#f4f4f4, #d2d2d2);
}
.scroll .right {
  margin-right: 8px;
}
.scroll .left path,
.scroll .right path {
  fill: #444;
}
.sheets {
  display: flex;
  height: 19px;
  background: #f0f0f0;
  border-bottom: 1px solid #b0a8a8;
  font-size: 12px;
  line-height: 18px;
  color: #000;
}
.nav {
  display: flex;
  align-items: center;
  justify-content: center;
  width: 17px;
  height: 18px;
  border: 1px solid #808080;
  border-top-color: #fff;
  border-left-color: #fff;
}
.nav:first-child {
  justify-content: flex-end;
  width: 6px;
}
.nav path {
  fill: #666;
  stroke: #666;
}
.edge {
  border-top: 1px solid #000;
  width: 11px;
  height: 18px;
}
.edge path {
  fill: none;
  stroke: #000;
}
.sheet {
  height: 18px;
  padding: 0 5px;
  border-top: 1px solid #000;
  border-bottom: 1px solid #000;
  white-space: pre;
}
.sheet.active {
  padding: 0 3px;
  background: #fff;
  border-bottom-color: #fff;
  font-weight: bold;
}
.rest {
  flex: 1;
  border-top: 1px solid #000;
}
.status {
  display: flex;
  height: 22px;
  background: #f0eded;
  font: 14px/22px "Open Sans", "Noto Sans", sans-serif;
  color: #111;
  white-space: nowrap;
}
.help {
  flex: 1;
}
.cell {
  padding-left: 5px;
  border-right: 1px solid #d2cece;
}
.green { color: #1e8a1e; }
.ball {
  width: 18px;
  padding: 2px 0 0 3px;
}
.ball svg {
  shape-rendering: auto;
}
.clock { width: 123px; }
.corner {
  width: 22px;
  padding: 8px 0 0 8px;
  border: 0;
}
.behind {
  display: flex;
  flex-direction: column;
  width: 18px;
  background: #fff;
}
.dark {
  height: 23px;
  background: linear-gradient(#3a4049, #1d232c 70%, #8a8f96);
}
.bluebar {
  height: 32px;
  padding: 7px 0 0 2px;
  background: #cfdff7;
}
.chevrons {
  height: 30px;
  background: linear-gradient(#5f92e0, #2258b8);
}
.paper {
  flex: 1;
  margin-top: 23px;
  border-top: 2px solid #8c8c8c;
  border-right: 1px solid #bbb;
}
.bottom {
  height: 2px;
  background: linear-gradient(90deg, #5f7ea8 0, #6f8db4 210px, #20303f 215px, #2d3f52 700px, #54708e 100%);
}
</style>
